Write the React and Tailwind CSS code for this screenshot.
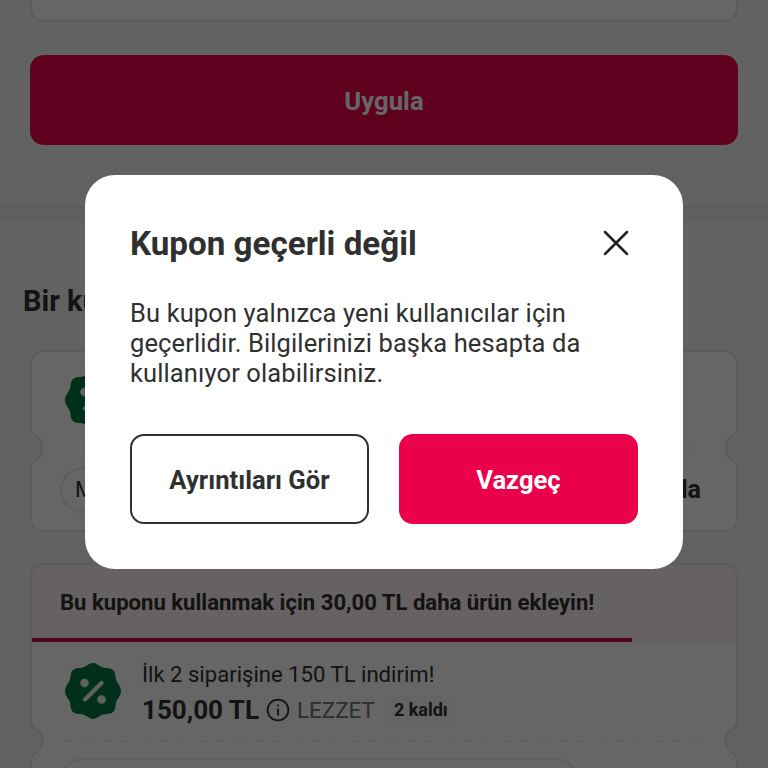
import clsx from 'clsx'

function Notch({ side }) {
  return (
    <svg
      className={clsx('absolute -top-[19px] h-[40px] w-[18px]', side === 'left' ? '-left-[5px]' : '-right-[5px] -scale-x-100')}
      viewBox="0 0 18 40"
      fill="none"
    >
      <path d="M0 0H5V2C5 5 6 6 8.500 7.500C18 13 18 27 8.500 32.500C6 34 5 35 5 38V40H0Z" fill="#f6f6f6" />
      <path d="M4 0V2C4 5 5.500 6 8 7.500C18 13 18 27 8 32.500C5.500 34 4 35 4 38V40" stroke="#e6e6e6" strokeWidth="2" />
    </svg>
  )
}

function Divider() {
  return (
    <div className="relative flex h-[2px] items-center px-[32px]">
      <svg className="w-full" height="2">
        <line x1="0" y1="1" x2="100%" y2="1" stroke="#f3f3f3" strokeWidth="2" strokeDasharray="10 9" />
      </svg>
      <Notch side="left" />
      <Notch side="right" />
    </div>
  )
}

// scalloped badge outline
const badgePath =
  'M28 0C32 0 34.500 3.600 38 4.400C41.500 5.200 46 4.500 48.500 7.500C51 10.500 50 14.500 51.600 18C53 21 56 23.500 56 28C56 32.500 53 35 51.600 38C50 41.500 51 45.500 48.500 48.500C46 51.500 41.500 50.800 38 51.600C34.500 52.400 32 56 28 56C24 56 21.500 52.400 18 51.600C14.500 50.800 10 51.500 7.500 48.500C5 45.500 6 41.500 4.400 38C3 35 0 32.500 0 28C0 23.500 3 21 4.400 18C6 14.500 5 10.500 7.500 7.500C10 4.500 14.500 5.200 18 4.400C21.500 3.600 24 0 28 0Z'

function DiscountBadge() {
  return (
    <svg className="h-[56px] w-[56px] shrink-0" viewBox="0 0 56 56">
      <path d={badgePath} fill="#007840" />
      <g fill="#eef6f1">
        <circle cx="19.500" cy="20" r="4.300" />
        <circle cx="36.500" cy="36.500" r="4.300" />
      </g>
      <path d="M20 36.500L36.500 20" stroke="#eef6f1" strokeWidth="4.200" strokeLinecap="round" />
    </svg>
  )
}

function InfoIcon() {
  return (
    <svg className="h-[24px] w-[24px]" viewBox="0 0 24 24" fill="none" stroke="#303030" strokeWidth="1.800">
      <circle cx="12" cy="12" r="10.400" />
      <path d="M12 10.500V17.500M12 6.500V8.500" />
    </svg>
  )
}

function Coupons() {
  return (
    <div className="flex h-full flex-col overflow-hidden bg-[#f6f6f6] text-[#303030]">
      <div className="mx-[30px] h-[22px] shrink-0 rounded-b-[14px] border-2 border-t-0 border-[#e8e8e8] bg-white" />
      <button className="mx-[30px] mt-[33px] h-[90px] shrink-0 rounded-[14px] bg-[#ea004b] pt-[3px] text-[25.7px] font-bold text-white">
        Uygula
      </button>
      <div className="mt-[60px] h-[14px] shrink-0 bg-[#ededed]" />
      <h2 className="ml-[23px] mt-[62px] text-[29px] leading-[40px] font-bold">Bir kupon seç</h2>

      <div className="mx-[30px] mt-[29px] flex h-[182px] shrink-0 flex-col rounded-[14px] border-2 border-[#e6e6e6] bg-white">
        <div className="flex h-[95px] items-center pl-[33px]">
          <DiscountBadge />
        </div>
        <Divider />
        <div className="flex flex-1 items-center justify-between pr-[35px] pl-[28px]">
          <span className="flex h-[46px] items-center rounded-full border-2 border-[#eaeaea] px-[13px] text-[22px]">
            Min. 150 TL
          </span>
          <span className="text-[25px] font-bold">Uygula</span>
        </div>
      </div>

      <div className="mx-[30px] mt-[31px] flex h-[260px] shrink-0 flex-col rounded-[14px] border-2 border-[#e6e6e6] bg-white">
        <div className="flex h-[77px] flex-col justify-between rounded-t-[12px] bg-[#fff2f4]">
          <p className="mt-[20px] pl-[28px] text-[22.1px] leading-[34px] font-bold whitespace-nowrap">
            Bu kuponu kullanmak için 30,00 TL daha ürün ekleyin!
          </p>
          <div className="h-[4px] w-[600px] bg-[#c8104c]" />
        </div>
        <div className="flex h-[98px] items-center pl-[33px]">
          <DiscountBadge />
          <div className="ml-[21px] flex flex-col pt-[6px]">
            <p className="text-[22.1px] leading-[32px]">İlk 2 siparişine 150 TL indirim!</p>
            <div className="flex items-center leading-[40px]">
              <span className="text-[26px] font-bold">150,00 TL</span>
              <span className="mr-[7px] ml-[7px]">
                <InfoIcon />
              </span>
              <span className="text-[22.4px] text-[#707070]">LEZZET</span>
              <span className="ml-[9px] rounded-[6px] bg-[#fafafa] px-[10px] text-[18px] leading-[32px] font-bold">2 kaldı</span>
            </div>
          </div>
        </div>
        <Divider />
        <div className="mt-[16px] ml-[28px] h-[46px] w-[518px] rounded-full border-2 border-[#eaeaea]" />
      </div>
    </div>
  )
}

function Dialog() {
  return (
    <div
      role="dialog"
      className="mb-[24px] flex h-[394px] w-[598px] flex-col rounded-[30px] bg-white px-[45px] pt-[45px] text-[#303030]"
    >
      <div className="flex h-[48px] items-center justify-between">
        <h1 className="text-[33.2px] font-bold">Kupon geçerli değil</h1>
        <button aria-label="Kapat" className="mr-[9px] mb-[2px]">
          <svg className="h-[26px] w-[26px]" viewBox="0 0 26 26" fill="none" stroke="#202020" strokeWidth="2.500" strokeLinecap="round">
            <path d="M2 2L24 24M24 2L2 24" />
          </svg>
        </button>
      </div>
      <p className="mt-[30px] text-[25.5px] leading-[30px] tracking-[0.12px]">
        Bu kupon yalnızca yeni kullanıcılar için
        <br />
        geçerlidir. Bilgilerinizi başka hesapta da
        <br />
        kullanıyor olabilirsiniz.
      </p>
      <div className="mt-[46px] grid grid-cols-2 gap-[30px] text-[25.6px] font-bold">
        <button className="h-[90px] rounded-[14px] border-2 border-[#303030] pt-[3px]">Ayrıntıları Gör</button>
        <button className="h-[90px] rounded-[14px] bg-[#ea004b] pt-[3px] text-white">Vazgeç</button>
      </div>
    </div>
  )
}

export default function App() {
  return (
    <div className="relative h-[768px] w-[768px] overflow-hidden font-['Roboto',sans-serif]">
      <Coupons />
      <div className="absolute inset-0 flex items-center justify-center bg-black/60">
        <Dialog />
      </div>
    </div>
  )
}
